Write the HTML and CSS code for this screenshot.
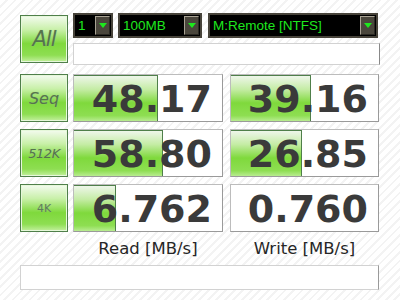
FILE: index.html
```html
<!DOCTYPE html>
<html lang="en">
<head>
    <meta charset="UTF-8">
    <title>CrystalDiskMark</title>
    <link rel="stylesheet" href="styles.css">
</head>
<body>
<div class="window">
    <div class="top">
        <button class="btn btn-all">All</button>
        <div class="controls">
            <div class="combos">
                <div class="combo combo-count"><span class="combo-text">1</span><span class="drop"></span></div>
                <div class="combo combo-size"><span class="combo-text">100MB</span><span class="drop"></span></div>
                <div class="combo combo-drive"><span class="combo-text">M:Remote [NTFS]</span><span class="drop"></span></div>
            </div>
            <div class="comment"></div>
        </div>
    </div>

    <div class="results">
        <button class="btn btn-seq">Seq</button>
        <div class="score"><div class="bar" style="width: 84px"></div><span class="num">48.17</span></div>
        <div class="score"><div class="bar" style="width: 80px"></div><span class="num">39.16</span></div>

        <button class="btn btn-512">512K</button>
        <div class="score"><div class="bar" style="width: 89px"></div><span class="num">58.80</span></div>
        <div class="score"><div class="bar" style="width: 71px"></div><span class="num">26.85</span></div>

        <button class="btn btn-4k">4K</button>
        <div class="score"><div class="bar" style="width: 42px"></div><span class="num">6.762</span></div>
        <div class="score"><span class="num">0.760</span></div>

        <span class="label label-read">Read [MB/s]</span>
        <span class="label label-write">Write [MB/s]</span>
    </div>

    <div class="status"></div>
</div>
</body>
</html>
```

FILE: styles.css
```css
body {
    margin: 0;
    background: #fff repeating-linear-gradient(135deg, #fff 0, #fff 4px, #f3f3f3 4px, #f3f3f3 6px);
    font-family: "DejaVu Sans", Verdana, sans-serif;
}

.window {
    width: 400px;
    height: 300px;
    padding: 13px 0 0 20px;
    box-sizing: border-box;
}

.top {
    display: flex;
    gap: 5px;
}

.btn {
    width: 48px;
    height: 48px;
    padding: 0;
    border: 1px solid #4f7f4a;
    box-shadow: inset 0 0 0 1px #e6f8da;
    background: linear-gradient(#f4fbf0 0%, #c8f0a8 30%, #7fd93c 60%, #8ede52 85%, #c4f0a0 100%);
    color: #55744c;
    font-family: "DejaVu Sans", sans-serif;
    font-style: italic;
    text-shadow: 0 0 1px #9cc48c;
    outline: 0;
}

.btn-all {
    margin-top: 2px;
    font-size: 21px;
    letter-spacing: -1px;
}

.btn-seq {
    font-size: 16px;
}

.btn-512 {
    font-size: 13px;
    letter-spacing: -0.5px;
}

.btn-4k {
    font-size: 11px;
    font-style: normal;
    color: #5f7e58;
}

.controls {
    display: flex;
    flex-direction: column;
    gap: 5px;
}

.combos {
    display: flex;
    gap: 5px;
}

.combo {
    height: 25px;
    box-sizing: border-box;
    border: 2px solid #47433a;
    background: #000;
    display: flex;
    align-items: center;
    justify-content: space-between;
}

.combo-count { width: 40px; }
.combo-size { width: 84px; }
.combo-drive { width: 170px; margin-left: 1px; }

.combo-text {
    padding-left: 3px;
    color: #1ee81e;
    font-family: "Liberation Sans", Arial, sans-serif;
    font-size: 13.5px;
}

.drop {
    width: 15px;
    height: 19px;
    margin-right: 1px;
    box-sizing: border-box;
    border: 1px solid #a8a293;
    border-right-color: #2a2822;
    border-bottom-color: #2a2822;
    background: #4a463c;
    display: flex;
    align-items: center;
    justify-content: center;
}

.drop::after {
    content: "";
    border-left: 4px solid transparent;
    border-right: 4px solid transparent;
    border-top: 5px solid #1ee81e;
}

.comment {
    width: 307px;
    height: 22px;
    box-sizing: border-box;
    background: #fff;
    border: 1px solid #d2d2d2;
    border-right: 1px solid #888;
}

.results {
    display: grid;
    grid-template-columns: 48px 150px 151px;
    grid-template-rows: repeat(3, 48px) 26px;
    column-gap: 5px;
    row-gap: 7px;
    margin-top: 9px;
}

.score {
    display: grid;
    background: #fff;
    border: 1px solid #bcbcbc;
    border-right-color: #9a9a9a;
    border-bottom-color: #9a9a9a;
    overflow: hidden;
}

.score:nth-child(3n) {
    margin-left: 2px;
}

.bar,
.num {
    grid-area: 1 / 1;
}

.bar {
    box-sizing: border-box;
    border-top: 1px solid #4f7f4a;
    border-right: 1px solid #4f7f4a;
    background: linear-gradient(#eef6ea 0%, #c4eca4 30%, #7fd93c 60%, #8ede52 88%, #b8ec90 100%);
}

.num {
    align-self: center;
    justify-self: end;
    padding: 2px 10px 0 0;
    font-size: 38px;
    font-weight: bold;
    line-height: 1;
    color: #3a3a3a;
}

.label {
    grid-row: 4;
    text-align: center;
    font-size: 16.5px;
    color: #262626;
    line-height: 20px;
    padding-top: 0;
}

.label-read { grid-column: 2; }
.label-write { grid-column: 3; padding-left: 2px; }

.status {
    width: 359px;
    height: 25px;
    box-sizing: border-box;
    background: #fff;
    border: 1px solid #d2d2d2;
    border-right-color: #9a9a9a;
}
```
